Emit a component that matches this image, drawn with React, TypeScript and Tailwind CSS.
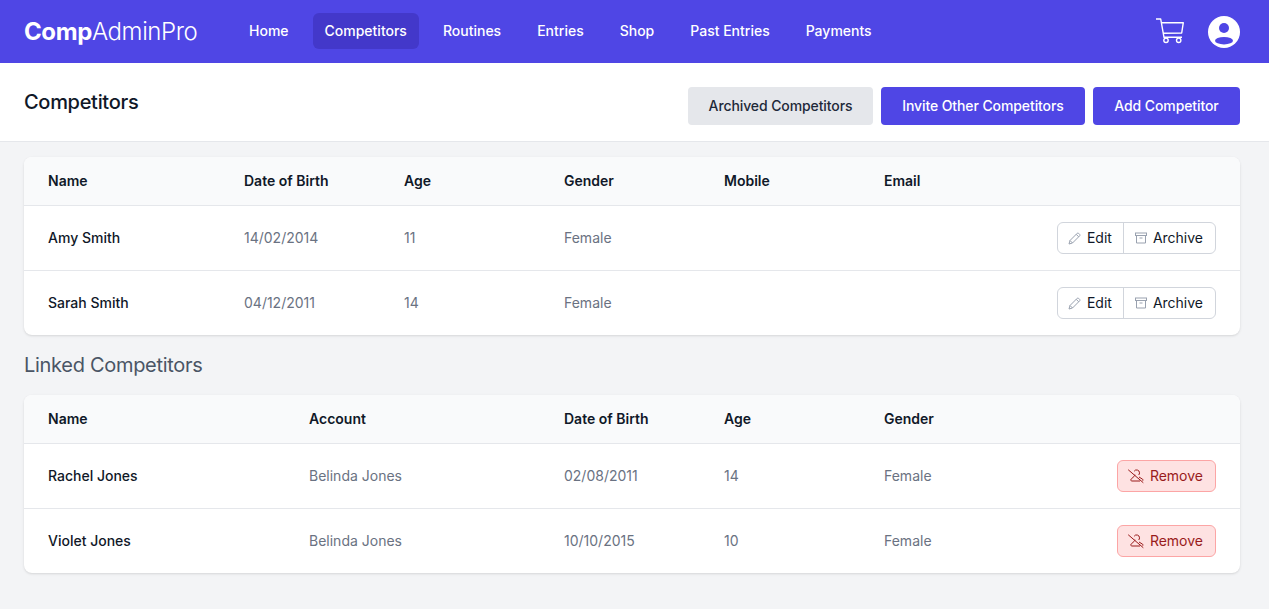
const navItems = ["Home", "Competitors", "Routines", "Entries", "Shop", "Past Entries", "Payments"];

const competitors = [
  { name: "Amy Smith", dob: "14/02/2014", age: "11", gender: "Female" },
  { name: "Sarah Smith", dob: "04/12/2011", age: "14", gender: "Female" },
];

const linked = [
  { name: "Rachel Jones", account: "Belinda Jones", dob: "02/08/2011", age: "14", gender: "Female" },
  { name: "Violet Jones", account: "Belinda Jones", dob: "10/10/2015", age: "10", gender: "Female" },
];

function CartIcon() {
  return (
    <svg viewBox="0 0 30 28" fill="none" stroke="currentColor" strokeWidth="1.4" strokeLinejoin="round" className="w-[30px] h-7">
      <path d="M1 1h4.7L9 19.3h18" />
      <path d="M6.7 4.7h21.6L26.7 15 8 15.3" />
      <circle cx="11" cy="22.3" r="2.2" />
      <circle cx="23.7" cy="22.3" r="2.2" />
    </svg>
  );
}

function UserIcon() {
  return (
    <svg viewBox="0 0 32 32" className="w-8 h-8">
      <circle cx="16" cy="16" r="16" fill="#fff" />
      <circle cx="16" cy="12" r="5" fill="#4f46e5" />
      <ellipse cx="16" cy="24.7" rx="9" ry="3.7" fill="#4f46e5" />
    </svg>
  );
}

function PencilIcon() {
  return (
    <svg viewBox="0 0 14 14" fill="none" stroke="currentColor" strokeWidth="1" strokeLinejoin="round" className="w-3.5 h-3.5 mr-[5px] text-gray-400">
      <path d="M1 13l1-3.5L9.2 2.3c.4-.4 1-.4 1.4 0l1.1 1.1c.4.4.4 1 0 1.4L4.5 12z" />
      <path d="M8.2 3.3l2.5 2.5M2 9.5L4.5 12" />
    </svg>
  );
}

function ArchiveIcon() {
  return (
    <svg viewBox="0 0 14 14" fill="none" stroke="currentColor" strokeWidth="1" className="w-3.5 h-3.5 mr-[5px] text-gray-400">
      <rect x="1.5" y="2" width="11" height="2.5" />
      <path d="M2.5 4.5V12h9V4.5M5.5 7h3" />
    </svg>
  );
}

function UserSlashIcon() {
  return (
    <svg viewBox="0 0 16 16" fill="none" stroke="currentColor" strokeWidth="1" className="w-4 h-4 mr-1.5">
      <path d="M.5 2L15 14.5" strokeLinecap="round" />
      <path d="M6.2 3.2a2.9 2.9 0 0 1 5.3 1.6c0 .9-.3 1.6-.8 2.2" />
      <path d="M6.8 6.6c.1.9-.1 1.5-.9 2L3.2 11c-.8.7-.4 2 .6 2h8.2" strokeLinejoin="round" />
      <path d="M11 9l3.6 2.2c.5.4.6 1 .2 1.5" />
    </svg>
  );
}

function CompetitorActions() {
  return (
    <div className="inline-flex h-8 rounded-md border border-gray-300 bg-white text-sm text-gray-900">
      <span className="flex items-center pl-2.5 pr-[11px] border-r border-gray-300">
        <PencilIcon />
        Edit
      </span>
      <span className="flex items-center pl-2.5 pr-3">
        <ArchiveIcon />
        Archive
      </span>
    </div>
  );
}

function RemoveButton() {
  return (
    <span className="inline-flex items-center h-8 pl-2.5 pr-3 rounded-md border border-[#fca5a5] bg-[#fee2e2] text-sm text-[#991b1b]">
      <UserSlashIcon />
      Remove
    </span>
  );
}

export default function App() {
  return (
    <div className="min-h-[609px] bg-gray-100 font-['Inter',sans-serif]">
      <nav className="flex items-center justify-between h-[63px] pl-6 pr-[29px] bg-[#4f46e5]">
        <div className="flex items-center">
          <div className="w-[213px] text-2xl tracking-[-0.4px] text-white font-light">
            <span className="font-bold">Comp</span>AdminPro
          </div>
          <div className="flex gap-3 -mt-0.5 text-sm font-medium text-white">
            {navItems.map((item) => (
              <span key={item} className={`px-3 py-2 h-9 rounded-md ${item === "Competitors" ? "bg-[#4338ca]" : ""}`}>
                {item}
              </span>
            ))}
          </div>
        </div>
        <div className="flex items-center gap-[23px] text-white">
          <CartIcon />
          <UserIcon />
        </div>
      </nav>

      <header className="flex items-center justify-between h-[79px] pl-6 pr-[29px] bg-white border-b border-gray-200">
        <h1 className="text-xl font-medium tracking-[-0.3px] text-gray-900">Competitors</h1>
        <div className="flex gap-2 mt-[7px] text-sm font-medium tracking-[-0.1px]">
          <span className="flex items-center justify-center w-[185px] h-[38px] rounded bg-gray-200 text-gray-800">Archived Competitors</span>
          <span className="flex items-center justify-center w-[204px] h-[38px] rounded bg-[#4f46e5] text-white">Invite Other Competitors</span>
          <span className="flex items-center justify-center w-[147px] h-[38px] rounded bg-[#4f46e5] text-white">Add Competitor</span>
        </div>
      </header>

      <main className="pl-6 pr-[29px] pt-[15px]">
        <div className="bg-white rounded-lg shadow overflow-hidden">
          <div className="flex items-center h-[49px] px-6 bg-gray-50 border-b border-gray-200 text-sm font-semibold text-gray-900">
            <span className="w-[196px]">Name</span>
            <span className="w-40">Date of Birth</span>
            <span className="w-40">Age</span>
            <span className="w-40">Gender</span>
            <span className="w-40">Mobile</span>
            <span>Email</span>
          </div>
          {competitors.map((c, i) => (
            <div key={c.name} className={`flex items-center px-6 text-sm text-gray-500 ${i > 0 ? "h-[65px] border-t border-gray-200" : "h-16"}`}>
              <span className="w-[196px] font-medium text-gray-900">{c.name}</span>
              <span className="w-40">{c.dob}</span>
              <span className="w-40">{c.age}</span>
              <span className="w-40">{c.gender}</span>
              <span className="ml-auto">
                <CompetitorActions />
              </span>
            </div>
          ))}
        </div>

        <h2 className="my-4 text-xl tracking-[-0.3px] text-gray-600">Linked Competitors</h2>

        <div className="bg-white rounded-lg shadow overflow-hidden">
          <div className="flex items-center h-[49px] px-6 bg-gray-50 border-b border-gray-200 text-sm font-semibold text-gray-900">
            <span className="w-[261px]">Name</span>
            <span className="w-[255px]">Account</span>
            <span className="w-40">Date of Birth</span>
            <span className="w-40">Age</span>
            <span>Gender</span>
          </div>
          {linked.map((c, i) => (
            <div key={c.name} className={`flex items-center px-6 text-sm text-gray-500 ${i > 0 ? "h-[65px] border-t border-gray-200" : "h-16"}`}>
              <span className="w-[261px] font-medium text-gray-900">{c.name}</span>
              <span className="w-[255px]">{c.account}</span>
              <span className="w-40">{c.dob}</span>
              <span className="w-40">{c.age}</span>
              <span>{c.gender}</span>
              <span className="ml-auto">
                <RemoveButton />
              </span>
            </div>
          ))}
        </div>
      </main>
    </div>
  );
}
